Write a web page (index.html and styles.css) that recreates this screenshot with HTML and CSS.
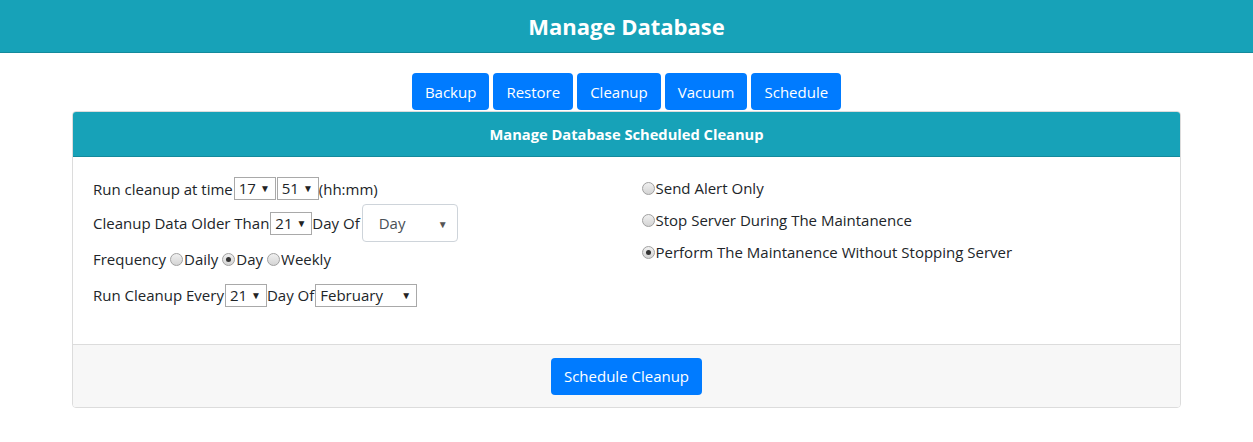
FILE: index.html
```html
<!DOCTYPE html>
<html>
<head>
<meta charset="utf-8">
<link rel="stylesheet" href="styles.css">
</head>
<body>
<header class="topbar"><h1 class="title">Manage Database</h1></header>
<nav class="tabs">
  <button class="btn">Backup</button>
  <button class="btn">Restore</button>
  <button class="btn">Cleanup</button>
  <button class="btn">Vacuum</button>
  <button class="btn">Schedule</button>
</nav>
<section class="card">
  <div class="card-header">Manage Database Scheduled Cleanup</div>
  <div class="card-body">
    <div class="col">
      <div class="line l1">Run cleanup at time<span class="sel w42"><select><option>17</option></select></span><span class="sel w42"><select><option>51</option></select></span>(hh:mm)</div>
      <div class="line l2">Cleanup Data Older Than<span class="sel w42"><select><option>21</option></select></span>Day Of<span class="fsel"><select><option>Day</option></select></span></div>
      <div class="line l3">Frequency<label class="rad sp"><input type="radio" name="f">Daily</label><label class="rad sp"><input type="radio" name="f" checked>Day</label><label class="rad sp"><input type="radio" name="f">Weekly</label></div>
      <div class="line l4">Run Cleanup Every<span class="sel w42"><select><option>21</option></select></span>Day Of<span class="sel w102"><select><option>February</option></select></span></div>
    </div>
    <div class="col right">
      <label class="rad rline"><input type="radio" name="m">Send Alert Only</label>
      <label class="rad rline"><input type="radio" name="m">Stop Server During The Maintanence</label>
      <label class="rad rline"><input type="radio" name="m" checked>Perform The Maintanence Without Stopping Server</label>
    </div>
  </div>
  <div class="card-footer"><button class="btn">Schedule Cleanup</button></div>
</section>
</body>
</html>
```
FILE: styles.css
```css
* { box-sizing: border-box; }
body {
  margin: 0;
  font-family: "Open Sans", "Noto Sans", sans-serif;
  font-size: 15px;
  color: #212529;
  background: #fff;
}
.topbar {
  background: #17a2b8;
  height: 53px;
  display: flex;
  align-items: center;
  justify-content: center;
  border-bottom: 1px solid #148a9c;
}
.title {
  margin: 0;
  color: #fff;
  font-size: 22px;
  font-weight: 700;
}
.tabs {
  display: flex;
  justify-content: center;
  gap: 4px;
  margin-top: 20px;
  height: 38px;
}
.btn {
  background: #007bff;
  color: #fff;
  border: none;
  border-radius: 4px;
  font-family: inherit;
  font-size: 15px;
  padding: 0 13px;
  height: 37px;
}
.card {
  margin: 0 72px 0 72px;
  border: 1px solid #dcdcdc;
  border-radius: 4px;
  overflow: hidden;
}
.card-header {
  background: #17a2b8;
  color: #fff;
  font-weight: 700;
  font-size: 14.7px;
  text-align: center;
  height: 44px;
  line-height: 44px;
}
.card-body {
  display: flex;
  padding: 20px;
  height: 188px;
  border-top: 1px solid #148a9c;
}
.col { width: 50%; }
.right { padding-left: 15px; margin-top: -5px; }
.line {
  display: flex;
  align-items: center;
  white-space: nowrap;
}
.l1 { height: 25px; margin-top: -1px; }
.l2 { height: 38px; margin-top: 3px; }
.l3 { height: 30px; margin-top: 2px; }
.l4 { height: 32px; margin-top: 5px; }
.sel {
  position: relative;
  display: inline-block;
  height: 23px;
  margin-left: 1px;
}
.sel select {
  appearance: none;
  -webkit-appearance: none;
  width: 100%;
  height: 23px;
  border: 1px solid #a9a9a9;
  background: #fff;
  font-family: inherit;
  font-size: 15px;
  color: #212529;
  padding: 0 0 0 4px;
  border-radius: 0;
  line-height: 21px;
}
.sel::after, .fsel::after {
  content: "\25BC";
  position: absolute;
  right: 6px;
  top: 4px;
  font-size: 10px;
  color: #222;
  pointer-events: none;
}
.w42 { width: 42px; }
.w102 { width: 102px; }
.fsel {
  position: relative;
  display: inline-block;
  width: 96px;
  height: 38px;
  margin-left: 2px;
}
.fsel select {
  appearance: none;
  -webkit-appearance: none;
  width: 100%;
  height: 38px;
  border: 1px solid #ced4da;
  border-radius: 4px;
  background: #fff;
  font-family: inherit;
  font-size: 15px;
  color: #495057;
  padding: 0 0 0 16px;
}
.fsel::after { top: 13px; right: 10px; color: #555; }
.rad {
  display: inline-flex;
  align-items: center;
}
.sp { margin-left: 4px; }
.rad input {
  appearance: none;
  -webkit-appearance: none;
  width: 13px;
  height: 13px;
  margin: 0 1px 0 0;
  border-radius: 50%;
  border: 1px solid #a0a0a0;
  background: linear-gradient(#f0f0f0, #d4d4d4);
  position: relative;
}
.rad input:checked::after {
  content: "";
  position: absolute;
  left: 3px;
  top: 3px;
  width: 5px;
  height: 5px;
  border-radius: 50%;
  background: #333;
}
.rline { display: flex; height: 32px; }
.card-footer {
  background: #f7f7f7;
  border-top: 1px solid #dcdcdc;
  height: 63px;
  display: flex;
  justify-content: center;
  align-items: center;
}
```
